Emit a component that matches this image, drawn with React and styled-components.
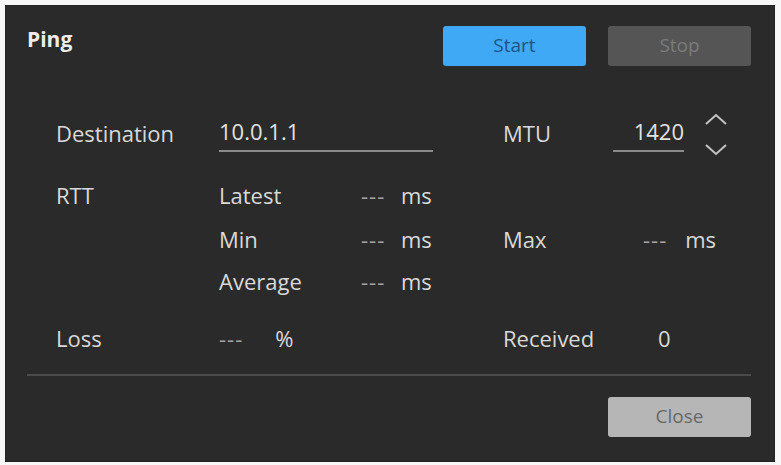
import React from "react";
import styled, { createGlobalStyle } from "styled-components";

const GlobalStyle = createGlobalStyle`
  html, body {
    margin: 0;
    padding: 0;
    background: #f7f7f7;
  }
  * {
    box-sizing: border-box;
  }
`;

const Page = styled.div`
  width: 781px;
  height: 465px;
  padding: 5px 6px 3px 5px;
`;

const Panel = styled.div`
  width: 770px;
  height: 457px;
  background: #2a2a2a;
  border: 1px solid #222;
  padding: 20px 23px 0 21px;
  font-family: "Open Sans", "Liberation Sans", sans-serif;
  color: #dadada;
  display: flex;
  flex-direction: column;
`;

const Header = styled.div`
  display: flex;
  align-items: flex-start;
  height: 40px;
`;

const Title = styled.h1`
  margin: 0;
  flex: 1;
  font-size: 21px;
  font-weight: 700;
  line-height: 28px;
  color: #ececec;
  margin-top: -1px;
`;

const Button = styled.button`
  width: 143px;
  height: 40px;
  border: none;
  border-radius: 3px;
  font-family: inherit;
  font-size: 19px;
  padding: 0 0 2px;
  background: ${(p) => p.$bg};
  color: ${(p) => p.$fg};
  margin-left: ${(p) => p.$ml || 0}px;
`;

const Body = styled.div`
  margin-top: 43px;
  padding-left: 29px;
`;

const Row = styled.div`
  display: grid;
  grid-template-columns: 163px 142px 40px 102px 110px 93px 30px;
  align-items: center;
  height: ${(p) => p.$h || 42}px;
  margin-top: ${(p) => p.$mt || 0}px;
  font-size: 22px;
  line-height: 28px;
`;

const Label = styled.span`
  color: #d9d9d9;
  grid-column: ${(p) => p.$col || "auto"};
`;

const Dash = styled.span`
  color: #a2a2a2;
  letter-spacing: 1px;
  font-size: 22px;
`;

const TextInput = styled.div`
  grid-column: ${(p) => p.$col || "auto"};
  width: ${(p) => p.$w}px;
  height: 38px;
  padding-top: 3px;
  border-bottom: 2px solid #8a8a8a;
  text-align: ${(p) => p.$align || "left"};
  color: #e2e2e2;
`;

const Pair = styled.div`
  grid-column: ${(p) => p.$col || "auto"};
  display: flex;
  gap: ${(p) => p.$gap}px;
  padding-left: ${(p) => p.$pl || 0}px;
`;

const Spinner = styled.div`
  display: flex;
  flex-direction: column;
  justify-content: space-between;
  height: 48px;
  padding: 3px 0 0;
  margin-left: -2px;
`;

const Divider = styled.div`
  height: 2px;
  background: #4b4b4b;
  margin-top: 15px;
`;

const Footer = styled.div`
  display: flex;
  justify-content: flex-end;
  margin-top: 21px;
`;

const Chevron = ({ up }) => (
  <svg width="24" height="14" viewBox="0 0 24 14">
    <polyline
      points={up ? "2,12 12,3 22,12" : "2,2 12,11 22,2"}
      fill="none"
      stroke="#c4c4c4"
      strokeWidth="2"
    />
  </svg>
);

export default function App() {
  return (
    <>
      <GlobalStyle />
      <Page>
        <Panel>
          <Header>
            <Title>Ping</Title>
            <Button $bg="#3fa9f5" $fg="#1c5585">
              Start
            </Button>
            <Button $bg="#555555" $fg="#7b7b7b" $ml={22}>
              Stop
            </Button>
          </Header>

          <Body>
            <Row $h={48}>
              <Label>Destination</Label>
              <TextInput $col="2 / 5" $w={214}>
                10.0.1.1
              </TextInput>
              <Label>MTU</Label>
              <TextInput $w={71} $align="right">
                1420
              </TextInput>
              <Spinner>
                <Chevron up />
                <Chevron />
              </Spinner>
            </Row>

            <Row $mt={17}>
              <Label>RTT</Label>
              <Label>Latest</Label>
              <Dash>---</Dash>
              <Label>ms</Label>
            </Row>

            <Row $mt={2}>
              <Label $col="2">Min</Label>
              <Dash>---</Dash>
              <Label>ms</Label>
              <Label>Max</Label>
              <Pair $col="6 / 8" $gap={18} $pl={30}>
                <Dash>---</Dash>
                <Label>ms</Label>
              </Pair>
            </Row>

            <Row>
              <Label $col="2">Average</Label>
              <Dash>---</Dash>
              <Label>ms</Label>
            </Row>

            <Row $mt={15}>
              <Label>Loss</Label>
              <Pair $gap={32}>
                <Dash>---</Dash>
                <Label>%</Label>
              </Pair>
              <Label $col="5">Received</Label>
              <Pair $col="6" $gap={0} $pl={45}>
                <Label>0</Label>
              </Pair>
            </Row>
          </Body>

          <Divider />

          <Footer>
            <Button $bg="#b6b6b6" $fg="#686868">
              Close
            </Button>
          </Footer>
        </Panel>
      </Page>
    </>
  );
}
